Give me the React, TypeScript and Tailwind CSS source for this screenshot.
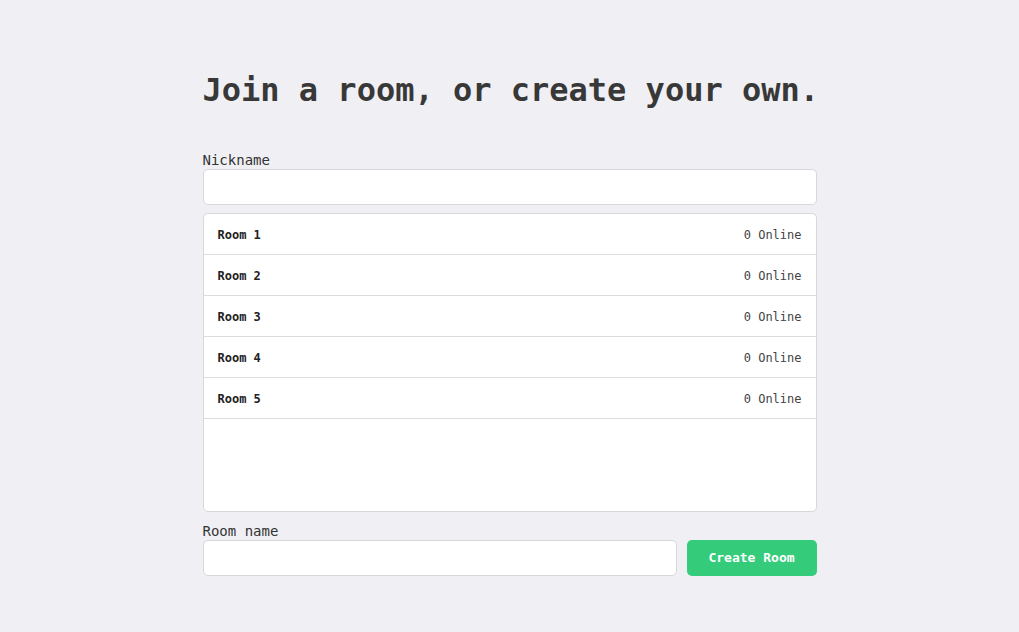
const rooms = ['Room 1', 'Room 2', 'Room 3', 'Room 4', 'Room 5']

export default function App() {
  return (
    <div className="min-h-screen bg-[#f0f0f4] font-['DejaVu_Sans_Mono','Liberation_Mono',monospace]">
      <div className="mx-auto w-[614px] pt-[66px]">
        <h1 className="whitespace-nowrap text-[32px] leading-[48px] font-bold text-[#383838]">Join a room, or create your own.</h1>

        <label className="mt-[38px] block text-[14px] leading-[17px] text-[#333]">Nickname</label>
        <input className="block h-[36px] w-full rounded-[5px] border border-[#d8d8dc] bg-white px-3 text-sm outline-none" />

        <div className="mt-[8px] h-[299px] overflow-hidden rounded-[5px] border border-[#d8d8dc] bg-white">
          {rooms.map(r => (
            <div key={r} className="flex h-[41px] items-center justify-between border-b border-[#dcdcdc] px-[14px] pt-[2px] text-[12px]">
              <span className="font-bold text-[#222]">{r}</span>
              <span className="text-[#444]">0 Online</span>
            </div>
          ))}
        </div>

        <label className="mt-[10px] block text-[14px] leading-[18px] text-[#333]">Room name</label>
        <div className="flex gap-[10px]">
          <input className="h-[36px] flex-1 rounded-[5px] border border-[#d8d8dc] bg-white px-3 text-sm outline-none" />
          <button className="h-[36px] w-[130px] rounded-[5px] bg-[#34cb7b] text-[13px] font-bold text-white">Create Room</button>
        </div>
      </div>
    </div>
  )
}
